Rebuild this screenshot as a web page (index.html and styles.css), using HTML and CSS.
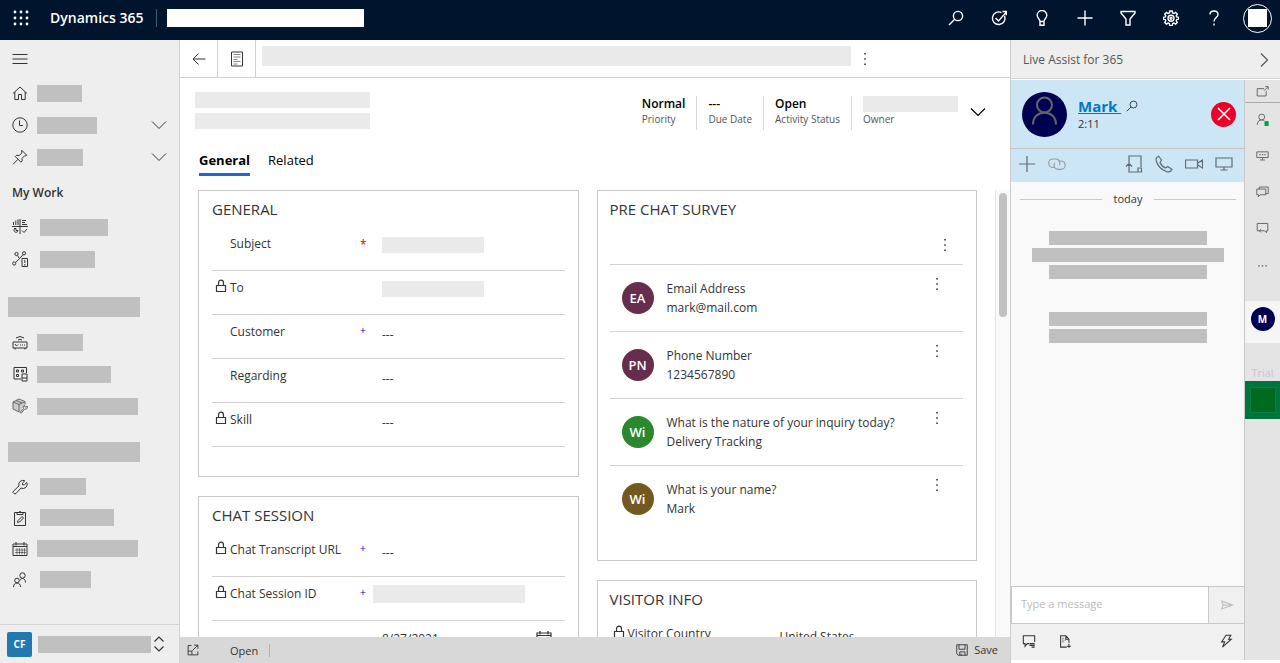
FILE: index.html
```html
<!DOCTYPE html>
<html lang="en">
<head>
    <meta charset="UTF-8">
    <meta name="viewport" content="width=device-width, initial-scale=1.0">
    <title>Dynamics 365</title>
    <link rel="stylesheet" href="styles.css">
</head>
<body>

    <!-- Shared icons -->
    <svg class="sprite" aria-hidden="true">
        <symbol id="lock" viewBox="0 0 12 14"><path d="M1.500 6.500h9v6h-9zM3.500 6.500V4a2.500 2.800 0 0 1 5 0v2.500"/></symbol>
        <symbol id="chevron" viewBox="0 0 16 16"><path d="M1 4.500l7 7 7-7"/></symbol>
        <symbol id="dots" viewBox="0 0 4 16"><path class="fill" d="M1.200 2h1.600v1.600H1.200zM1.200 7.200h1.600v1.600H1.200zM1.200 12.400h1.600v1.600H1.200z"/></symbol>
        <symbol id="search" viewBox="0 0 16 16"><circle cx="10" cy="6" r="4.600"/><path d="M6.700 9.300L1 15"/></symbol>
        <symbol id="calendar" viewBox="0 0 16 16"><path d="M1 3h14v11.500H1zM1 5.500h14M4 1v3.500M12 1v3.500"/><path class="thin" d="M5 7v6.500M7.500 7v6.500M10 7v6.500M12.500 7v6.500M3 9h11M3 11.500h11"/></symbol>
    </svg>

    <header class="topbar">
        <button class="icon-btn waffle" aria-label="App launcher">
            <svg viewBox="0 0 16 16"><g class="fill"><circle cx="2" cy="2" r="1.400"/><circle cx="8" cy="2" r="1.400"/><circle cx="14" cy="2" r="1.400"/><circle cx="2" cy="8" r="1.400"/><circle cx="8" cy="8" r="1.400"/><circle cx="14" cy="8" r="1.400"/><circle cx="2" cy="14" r="1.400"/><circle cx="8" cy="14" r="1.400"/><circle cx="14" cy="14" r="1.400"/></g></svg>
        </button>
        <a class="brand" href="#">Dynamics 365</a>
        <span class="app-name"></span>
        <div class="top-actions">
            <button class="icon-btn" aria-label="Search"><svg viewBox="0 0 16 16"><use href="#search"/></svg></button>
            <button class="icon-btn" aria-label="Assistant"><svg viewBox="0 0 16 16"><path d="M13.600 6A6.300 6.300 0 1 1 10.500 2.600M4.500 8l3 3L15 2.500M11.500 1.500H15.300V5.300"/></svg></button>
            <button class="icon-btn" aria-label="Insights"><svg viewBox="0 0 16 16"><path d="M6 11.500C6 9 3.200 8.300 3.200 5.300a4.800 4.800 0 0 1 9.600 0C12.800 8.300 10 9 10 11.500zM6 11.500v3.800h4v-3.800"/></svg></button>
            <button class="icon-btn" aria-label="New"><svg viewBox="0 0 16 16"><path d="M8 .5v15M.5 8h15"/></svg></button>
            <button class="icon-btn" aria-label="Filter"><svg viewBox="0 0 16 16"><path d="M1 1.500h14v1.500L10 9v6H6V9L1 3z"/></svg></button>
            <button class="icon-btn" aria-label="Settings"><svg viewBox="0 0 16 16"><path d="M6.800 1h2.400l.4 2 1.300.5 1.700-1.100 1.700 1.700-1.100 1.700.5 1.200 2 .4v1.700l-2 .4-.5 1.300 1.100 1.700-1.700 1.700-1.700-1.100-1.300.5-.4 2H6.800l-.4-2-1.300-.5-1.700 1.100-1.700-1.700 1.100-1.700-.5-1.300-2-.4V7.400l2-.4.5-1.200L1.700 4.100l1.700-1.700 1.700 1.100L6.400 3z"/><circle cx="8" cy="8.200" r="3"/><circle cx="8" cy="8.200" r="1"/></svg></button>
            <button class="icon-btn" aria-label="Help"><svg viewBox="0 0 16 16"><path d="M4 4.500C4 2.300 5.700 1 8 1s4 1.300 4 3.500C12 7.500 8 7.800 8 11.500M8 13.500v2"/></svg></button>
            <button class="account" aria-label="Account"><span></span></button>
        </div>
    </header>

    <div class="layout">

        <!-- Site map -->
        <nav class="sidebar">
            <div class="nav-scroll">
                <button class="nav-item menu" aria-label="Collapse menu"><svg viewBox="0 0 16 16"><path d="M.5 3.500h15M.5 8h15M.5 12.500h15"/></svg></button>
                <a class="nav-item" href="#"><svg viewBox="0 0 16 16"><path d="M1 8.500L8 2l7 6.500M2.800 7v7.500h3.700V9.500h3v5h3.700V7"/></svg><span class="bar w45"></span></a>
                <a class="nav-item" href="#"><svg viewBox="0 0 16 16"><circle cx="8" cy="8" r="7.200"/><path d="M7.500 3.500v5H11"/></svg><span class="bar w60"></span><svg class="expand" viewBox="0 0 16 16"><use href="#chevron"/></svg></a>
                <a class="nav-item" href="#"><svg viewBox="0 0 16 16"><path d="M9.800 1.300l5 5-1.300.6-.8-.2-2.700 2.700.2 2.500-1.300 1.300-5.600-5.600 1.300-1.300 2.600.2L10 3.800l-.4-1zM6 10.300L1 15.300"/></svg><span class="bar w46"></span><svg class="expand" viewBox="0 0 16 16"><use href="#chevron"/></svg></a>

                <h2 class="nav-heading">My Work</h2>
                <a class="nav-item wide" href="#"><svg viewBox="0 0 16 16"><path d="M0 7.500h16M8 0v15M1.500 6V3M3.800 6V1.500M6 6V.5M10 1.500h4M10 3.500h3M10 5.500h5M10 11.500l2 2 3-3.500M2 9.500h2v2h2a2 2 0 1 1-3.500-1.500"/></svg><span class="bar w68"></span></a>
                <a class="nav-item wide" href="#"><svg viewBox="0 0 16 16"><circle cx="4.500" cy="3" r="1.600"/><circle cx="12" cy="2.300" r="1.600"/><circle cx="2.200" cy="12.500" r="1.600"/><path d="M5.500 4.500l2 3.200L11 3.700M7.500 7.700L3.500 11.500M10 7.500h5.500v8H10zM12.800 9v3M12.800 13v1.500"/></svg><span class="bar w55"></span></a>

                <div class="group-bar w132"></div>
                <a class="nav-item" href="#"><svg viewBox="0 0 16 16"><path d="M1 8h14v6H1zM3 14v1.500M13 14v1.500M3 10l1.500 2L6 10.500M8 11h1M10 11h1M12 11h1M4 4q4-3 8 0M6 6q2-1.500 4 0"/></svg><span class="bar w46"></span></a>
                <a class="nav-item" href="#"><svg viewBox="0 0 16 16"><path d="M9 13H2V1.500h12.500V7M4.500 4h2v2h-2zM9.500 4h2v2h-2zM4.500 8.500h2v2h-2zM10 8h5v7h-5zM10 12h5"/></svg><span class="bar w74"></span></a>
                <a class="nav-item soft" href="#"><svg viewBox="0 0 16 16"><path class="shade" d="M1 4l6-3 6 2.500v3L8 13.500l-1 .5-6-3z"/><path d="M1 4l6 2.500L13 3.500 7 1zM1 4v7l6 3V6.500M13 3.500v3M4 2.500l6 2.500M8 14.500l3.500-4a2 2 0 0 1 1-3l.5 1.500h1.500l.5-1a2 2 0 0 1-2.500 3L9.500 15z"/></svg><span class="bar w101"></span></a>

                <div class="group-bar second w132"></div>
                <a class="nav-item wide" href="#"><svg viewBox="0 0 16 16"><path d="M2 14.500a1.600 1.600 0 0 1-.5-2.500L7 7a4.200 4.200 0 0 1 5.800-5.200L10.500 4v1.800h1.800l2.500-2.300A4.200 4.200 0 0 1 9 9l-5 5.500a1.600 1.600 0 0 1-2 0z"/></svg><span class="bar w46"></span></a>
                <a class="nav-item wide" href="#"><svg viewBox="0 0 16 16"><path d="M2.500 2.500h11v13h-11zM5 4.500v-2h2a1 1 0 0 1 2 0h2v2zM5.500 12.500l.5-2L10 6.500l1.500 1.500-4 4z"/></svg><span class="bar w74"></span></a>
                <a class="nav-item" href="#"><svg viewBox="0 0 16 16"><use href="#calendar"/></svg><span class="bar w101"></span></a>
                <a class="nav-item wide" href="#"><svg viewBox="0 0 16 16"><circle cx="10.500" cy="3.500" r="2.700"/><circle cx="5" cy="8.500" r="2.300"/><path d="M8 8.500c.5-1.500 1.300-2 2.500-2s3 1 3 4M1.500 15c0-2.500 1.500-4 3.500-4s3.500 1.500 3.500 4"/></svg><span class="bar w51"></span></a>
            </div>
            <button class="area-switch">
                <span class="area-badge">CF</span>
                <span class="bar w113"></span>
                <svg viewBox="0 0 12 16"><path d="M1.500 5.500L6 1l4.500 4.500M1.500 10.500L6 15l4.500-4.500"/></svg>
            </button>
        </nav>

        <!-- Record -->
        <main class="record">
            <div class="command-bar">
                <button class="cmd" aria-label="Back"><svg viewBox="0 0 16 16"><path d="M14.500 8H2M7.500 2.500L2 8l5.500 5.500"/></svg></button>
                <button class="cmd" aria-label="Form"><svg viewBox="0 0 16 16"><path d="M2.500 1h11v14h-11z"/><path class="thin" d="M4.500 3.500h7M4.500 6h7M4.500 8.500h4M4.500 10.500h7M4.500 13h4"/></svg></button>
                <span class="command-fill"></span>
                <button class="icon-btn more" aria-label="More commands"><svg viewBox="0 0 4 16"><use href="#dots"/></svg></button>
            </div>

            <div class="record-head">
                <div class="record-title"><span></span><span></span></div>
                <dl class="head-fields">
                    <div><dd>Normal</dd><dt>Priority</dt></div>
                    <div><dd>---</dd><dt>Due Date</dt></div>
                    <div><dd>Open</dd><dt>Activity Status</dt></div>
                    <div><dd class="owner"></dd><dt>Owner</dt></div>
                </dl>
                <button class="icon-btn head-expand" aria-label="More header fields"><svg viewBox="0 0 16 16"><use href="#chevron"/></svg></button>
            </div>

            <div class="tabs" role="tablist">
                <button class="tab active" role="tab" aria-selected="true">General</button>
                <button class="tab" role="tab" aria-selected="false">Related</button>
            </div>

            <div class="form-area">
                <div class="form-grid">
                    <div class="column">
                        <section class="card general">
                            <h2>GENERAL</h2>
                            <div class="field"><span class="lock"></span><span class="label">Subject</span><span class="mark required">*</span><span class="redacted"></span></div>
                            <div class="field"><svg class="lock"><use href="#lock"/></svg><span class="label">To</span><span class="mark"></span><span class="redacted"></span></div>
                            <div class="field"><span class="lock"></span><span class="label">Customer</span><span class="mark">+</span><span class="value">---</span></div>
                            <div class="field"><span class="lock"></span><span class="label">Regarding</span><span class="mark"></span><span class="value">---</span></div>
                            <div class="field"><svg class="lock"><use href="#lock"/></svg><span class="label">Skill</span><span class="mark"></span><span class="value">---</span></div>
                        </section>
                        <section class="card">
                            <h2>CHAT SESSION</h2>
                            <div class="field"><svg class="lock"><use href="#lock"/></svg><span class="label">Chat Transcript URL</span><span class="mark">+</span><span class="value">---</span></div>
                            <div class="field"><svg class="lock"><use href="#lock"/></svg><span class="label">Chat Session ID</span><span class="mark">+</span><span class="redacted long"></span></div>
                            <div class="field date"><span class="lock"></span><span class="label"></span><span class="mark"></span><span class="value">8/27/2021</span><svg class="date-icon" viewBox="0 0 16 16"><use href="#calendar"/></svg></div>
                        </section>
                    </div>
                    <div class="column">
                        <section class="card survey">
                            <h2>PRE CHAT SURVEY</h2>
                            <div class="survey-tools"><button class="icon-btn more" aria-label="More"><svg viewBox="0 0 4 16"><use href="#dots"/></svg></button></div>
                            <ul>
                                <li><span class="initials plum">EA</span><p>Email Address<br>mark@mail.com</p><button class="icon-btn more" aria-label="More"><svg viewBox="0 0 4 16"><use href="#dots"/></svg></button></li>
                                <li><span class="initials plum">PN</span><p>Phone Number<br>1234567890</p><button class="icon-btn more" aria-label="More"><svg viewBox="0 0 4 16"><use href="#dots"/></svg></button></li>
                                <li><span class="initials green">Wi</span><p>What is the nature of your inquiry today?<br>Delivery Tracking</p><button class="icon-btn more" aria-label="More"><svg viewBox="0 0 4 16"><use href="#dots"/></svg></button></li>
                                <li><span class="initials brown">Wi</span><p>What is your name?<br>Mark</p><button class="icon-btn more" aria-label="More"><svg viewBox="0 0 4 16"><use href="#dots"/></svg></button></li>
                            </ul>
                        </section>
                        <section class="card visitor-card">
                            <h2>VISITOR INFO</h2>
                            <div class="field"><svg class="lock"><use href="#lock"/></svg><span class="label">Visitor Country</span><span class="mark"></span><span class="value">United States</span></div>
                        </section>
                    </div>
                </div>
                <div class="scroll-track"><div class="scroll-thumb"></div></div>
            </div>

            <footer class="status-bar">
                <button class="icon-btn" aria-label="Pop out"><svg viewBox="0 0 16 16"><path d="M6 2H1.500v12.500h13V10M1.500 9.500h5v5M7 9l7.500-7.500M9.500 1.500h5v5"/></svg></button>
                <span class="state">Open</span>
                <button class="save"><svg viewBox="0 0 16 16"><path d="M1 1h14v14H3l-2-2zM4 1v6h8V1M5 15v-4.500h7V15M7 13v2"/></svg>Save</button>
            </footer>
        </main>

        <!-- Live Assist -->
        <aside class="assist">
            <header class="assist-head">
                <span>Live Assist for 365</span>
                <button class="icon-btn" aria-label="Collapse"><svg viewBox="0 0 16 16"><path d="M5 1.500L11.500 8 5 14.500"/></svg></button>
            </header>
            <div class="assist-body">
                <div class="chat">
                    <div class="visitor">
                        <svg class="visitor-photo" viewBox="0 0 45 45"><circle class="disc" cx="22.500" cy="22.500" r="22.500"/><circle cx="22.500" cy="13" r="7.500"/><path d="M11 32.500C11 25 16 20.800 22.500 20.800S34 25 34 32.500"/></svg>
                        <div class="visitor-info">
                            <div class="visitor-name"><a href="#">Mark&nbsp;</a><svg viewBox="0 0 16 16"><use href="#search"/></svg></div>
                            <div class="timer">2:11</div>
                        </div>
                        <button class="end-chat" aria-label="End chat"><svg viewBox="0 0 16 16"><path d="M2 2l12 12M14 2L2 14"/></svg></button>
                    </div>
                    <div class="chat-tools">
                        <button class="icon-btn" aria-label="Add"><svg viewBox="0 0 18 18"><path d="M9 1v16M1 9h16"/></svg></button>
                        <button class="icon-btn link" aria-label="Link"><svg viewBox="0 0 18 18"><path d="M7 12.500H5A4 4 0 0 1 5 4h3a4 4 0 0 1 3.300 6.200M10.500 6H13a4 4 0 0 1 0 8.300h-3A4 4 0 0 1 6.700 8"/></svg></button>
                        <span class="spacer"></span>
                        <button class="icon-btn" aria-label="Transfer"><svg viewBox="0 0 18 18"><path d="M4 8V1h12v11M1 11.500l3-3 3 3M4 9v8h9M13 13v4h3.500v-4z"/></svg></button>
                        <button class="icon-btn" aria-label="Call"><svg viewBox="0 0 18 18"><path d="M3.500 1.200L6.500 5 5 7.500c.8 2.200 3 4.400 5.500 5.500l2.300-1.500 4.200 3c-1.200 2.300-3.300 3-5.700 2C6.300 14.500 2.500 10.500 1.300 6 .7 4 1.500 2 3.500 1.200z"/></svg></button>
                        <button class="icon-btn" aria-label="Video"><svg viewBox="0 0 18 18"><path d="M.5 5h12v8H.5zM12.500 8.200L17.500 5v8l-5-3.200"/></svg></button>
                        <button class="icon-btn" aria-label="Share screen"><svg viewBox="0 0 18 18"><path d="M1 3h16v9H1zM9 12v2.500M5.500 15h7"/></svg></button>
                    </div>
                    <div class="messages">
                        <div class="day">today</div>
                        <div class="message"><span></span><span class="full"></span><span></span></div>
                        <div class="message"><span></span><span></span></div>
                    </div>
                    <form class="composer">
                        <input type="text" aria-label="Type a message" placeholder="Type a message">
                        <button type="button" aria-label="Send"><svg viewBox="0 0 16 16"><path d="M2 3.500L14.500 8 2 12.500 3.500 8zM3.500 8h11"/></svg></button>
                    </form>
                    <div class="chat-footer">
                        <button class="icon-btn" aria-label="Canned replies"><svg viewBox="0 0 16 16"><path d="M8 11H6l-2.500 3v-3H1.500V2h13v7M8.500 11h6M8.500 13h6M11 15h3.500"/></svg></button>
                        <button class="icon-btn" aria-label="Send file"><svg viewBox="0 0 16 16"><path d="M12.500 10V6L9 2H3v13h7M9 2v4h3.500M10.500 13.500l2 1.500 2-1.500M12.500 11v4"/><path class="thin" d="M4.500 5H7M4.500 7H9M4.500 9H7"/></svg></button>
                        <span class="spacer"></span>
                        <button class="icon-btn" aria-label="Quick actions"><svg viewBox="0 0 16 16"><path d="M8 1.500h5.500L11 6h3L4 15l2.500-6H3z"/></svg></button>
                    </div>
                </div>

                <div class="rail">
                    <button class="rail-pop" aria-label="Open in window"><svg viewBox="0 0 16 16"><path d="M10 4.500H1.500v9h11V7.500M10 7l4.500-4.500M11.500 2h3.500v3.500"/></svg></button>
                    <button aria-label="Agent status"><svg viewBox="0 0 16 16"><circle cx="7" cy="5" r="3.600"/><path d="M1.500 14.500c0-4 2.500-6 5.500-6 1.800 0 3 .8 3.500 1.500"/><path class="online" d="M10.500 10h5v6h-5z"/></svg></button>
                    <button aria-label="Chats"><svg viewBox="0 0 16 16"><path d="M1 3.500h14v7H1zM8 10.500v2.500M5 13.500h6M4 7h2M7 7h2M10 7h2"/></svg></button>
                    <button aria-label="Conversations"><svg viewBox="0 0 16 16"><path d="M1 5h11v7H5l-2 2.500V12H1zM4 5V2.500h11v8h-3"/></svg></button>
                    <button aria-label="Messages"><svg viewBox="0 0 16 16"><path d="M4 12H1.500V3h13v9H13v2.500L10.500 12H4M6 10L4 12l2 2"/></svg></button>
                    <button aria-label="More"><svg viewBox="0 0 16 16"><path class="dash" d="M2.500 11h11"/></svg></button>
                    <button class="rail-chat"><span>M</span></button>
                    <div class="trial">Trial</div>
                    <div class="trial-tile"><span></span></div>
                </div>
            </div>
        </aside>

    </div>

</body>
</html>
```

FILE: styles.css
```css
* {
    box-sizing: border-box;
}
body {
    margin: 0;
    height: 100vh;
    display: flex;
    flex-direction: column;
    overflow: hidden;
    font-family: "Open Sans", "Noto Sans", sans-serif;
    font-size: 12px;
    line-height: 18px;
    color: #333;
    background: #fff;
}
button {
    font: inherit;
    color: inherit;
    background: none;
    border: 0;
    padding: 0;
    display: flex;
    align-items: center;
    justify-content: center;
}
a {
    color: inherit;
    text-decoration: none;
}
h2, p, ul, dl, dd {
    margin: 0;
    padding: 0;
}
svg {
    width: 16px;
    height: 16px;
    flex: none;
    fill: none;
    stroke: currentColor;
    stroke-width: 1.2;
}
.sprite {
    position: absolute;
    width: 0;
    height: 0;
}
.fill {
    fill: currentColor;
    stroke: none;
}
.thin {
    stroke-width: 0.6;
}
.shade {
    fill: #ccc;
    stroke: none;
}
.spacer {
    flex: 1;
}

/* Top bar */
.topbar {
    height: 40px;
    flex: none;
    display: flex;
    align-items: center;
    padding: 0 8px 4px 13px;
    background: #00142e;
    color: #fff;
}
.topbar svg {
    stroke-width: 1.4;
}
.brand {
    margin-left: 21px;
    padding-right: 13px;
    border-right: 1px solid #4a586b;
    font-size: 14px;
    font-weight: 600;
}
.app-name {
    width: 197px;
    height: 18px;
    margin-left: 10px;
    background: #fff;
}
.top-actions {
    margin-left: auto;
    display: flex;
    align-items: center;
    gap: 27px;
}
.account {
    width: 29px;
    height: 29px;
    margin-left: -6px;
    border: 1px solid #fff;
    border-radius: 50%;
}
.account span {
    width: 19px;
    height: 18px;
    background: #fff;
}

.layout {
    flex: 1;
    min-height: 0;
    display: grid;
    grid-template-columns: 180px minmax(0, 1fr) 270px;
}

/* Sidebar */
.sidebar {
    display: flex;
    flex-direction: column;
    min-height: 0;
    background: #eee;
    border-right: 1px solid #d2d2d2;
}
.nav-scroll {
    flex: 1;
    min-height: 0;
    overflow: hidden;
    padding-top: 3px;
}
.nav-item {
    display: flex;
    align-items: center;
    height: 32px;
    padding: 0 12px;
    gap: 9px;
}
.nav-item.wide {
    gap: 12px;
}
.nav-item.menu {
    margin-bottom: 2px;
}
.nav-item svg {
    stroke-width: 1;
}
.nav-item.soft svg {
    color: #666;
}
.nav-item .thin {
    stroke-width: 0.6;
}
.nav-item .expand {
    margin-left: auto;
}
.nav-heading {
    padding: 11px 12px 9px;
    font-size: 12px;
    line-height: 18px;
    font-weight: 600;
}
.bar {
    height: 17px;
    background: #c0c0c0;
}
.group-bar {
    height: 20px;
    margin: 22px 8px 9px;
    background: #c0c0c0;
}
.group-bar.second {
    margin-top: 20px;
}
.group-bar.second ~ .nav-item {
    height: 31px;
}
.w45 { width: 45px; }
.w46 { width: 46px; }
.w51 { width: 51px; }
.w55 { width: 55px; }
.w60 { width: 60px; }
.w68 { width: 68px; }
.w74 { width: 74px; }
.w101 { width: 101px; }
.w113 { width: 113px; }
.w132 { width: 132px; }
.area-switch {
    height: 39px;
    justify-content: flex-start;
    padding-left: 7px;
    border-top: 1px solid #d2d2d2;
}
.area-badge {
    width: 25px;
    line-height: 25px;
    margin-right: 6px;
    border-radius: 2px;
    background: #2278b0;
    color: #fff;
    font-size: 10px;
    font-weight: 700;
}
.area-switch svg {
    width: 12px;
    margin-left: 2px;
}

/* Record */
.record {
    display: flex;
    flex-direction: column;
    min-width: 0;
    min-height: 0;
}
.command-bar {
    display: flex;
    height: 38px;
    flex: none;
    border-bottom: 1px solid #d2d2d2;
}
.cmd {
    width: 38px;
    border-right: 1px solid #d2d2d2;
}
.cmd svg {
    stroke-width: 1;
}
.command-fill {
    flex: 1;
    height: 20px;
    margin: 6px 12px 0 6px;
    background: #eaeaea;
}
.more svg {
    width: 4px;
}
.command-bar .more {
    margin-right: 143px;
}
.record-head {
    display: flex;
    padding: 14px 24px 0 15px;
    height: 66px;
}
.record-title {
    display: flex;
    flex-direction: column;
    gap: 5px;
}
.record-title span {
    width: 175px;
    height: 16px;
    background: #eaeaea;
}
.head-fields {
    display: flex;
    margin-left: auto;
    margin-top: 4px;
    height: 34px;
}
.head-fields div {
    padding: 0 11px;
    border-left: 1px solid #d8d8d8;
}
.head-fields div:first-child {
    border: 0;
}
.head-fields dd {
    height: 16px;
    line-height: 16px;
    font-weight: 600;
    color: #000;
}
.head-fields dt {
    line-height: 14px;
    font-size: 10px;
    color: #555;
}
.head-fields .owner {
    width: 95px;
    background: #eaeaea;
}
.head-expand {
    height: 40px;
    margin-left: 1px;
    color: #000;
}
.tabs {
    display: flex;
    gap: 18px;
    padding: 6px 19px 0;
    height: 46px;
}
.tab {
    height: 26px;
    padding-bottom: 3px;
    font-size: 13px;
    color: #000;
    border-bottom: 3px solid transparent;
}
.tab.active {
    font-weight: 700;
    border-color: #1f66d8;
}
.form-area {
    flex: 1;
    min-height: 0;
    overflow: hidden;
    display: flex;
}
.form-grid {
    flex: 1;
    display: grid;
    grid-template-columns: 1fr 1fr;
    gap: 18px;
    padding: 0 18px;
}
.column {
    display: flex;
    flex-direction: column;
    gap: 19px;
}
.card {
    flex: none;
    padding: 8px 13px 29px;
    border: 1px solid #c8c8c8;
}
.survey, .visitor-card {
    padding-left: 12px;
}
.survey {
    padding-bottom: 27px;
}
.card h2 {
    font-size: 15px;
    line-height: 20px;
    font-weight: 400;
    margin-bottom: 8px;
}
.field {
    display: grid;
    grid-template-columns: 18px 127px 25px 1fr auto;
    height: 44px;
    padding-top: 8px;
    border-bottom: 1px solid #d2d2d2;
}
.field.date {
    padding-top: 6px;
}
svg.lock {
    width: 12px;
    height: 14px;
    margin-left: 3px;
}
.mark {
    font-size: 10px;
    line-height: 14px;
    padding-left: 3px;
    color: #00c;
}
.required {
    font-size: 12px;
    line-height: 20px;
    color: #e00;
}
.value {
    margin-top: 3px;
}
.redacted {
    width: 102px;
    height: 16px;
    margin-top: 2px;
    background: #eaeaea;
}
.redacted.long {
    width: 152px;
    height: 18px;
    margin-top: 0;
    margin-left: -9px;
}
.date-icon {
    margin-top: 3px;
    margin-right: 13px;
}
.survey-tools {
    display: flex;
    justify-content: flex-end;
    height: 38px;
    padding: 0 16px 2px 0;
    border-bottom: 1px solid #d2d2d2;
}
.survey li {
    display: flex;
    height: 67px;
    padding: 14px 24px 0 12px;
    border-bottom: 1px solid #d2d2d2;
}
.survey li:last-child {
    border: 0;
}
.survey li p {
    flex: 1;
    margin-left: 13px;
    line-height: 19px;
}
.survey li .more {
    height: 16px;
    margin-top: -3px;
}
.initials {
    width: 32px;
    height: 32px;
    margin-top: 3px;
    border-radius: 50%;
    line-height: 32px;
    text-align: center;
    font-size: 13px;
    font-weight: 600;
    color: #fff;
}
.plum { background: #672d4c; }
.green { background: #2b882d; }
.brown { background: #73591f; }
.scroll-track {
    width: 15px;
    padding: 3px;
    background: #fafafa;
    border-left: 1px solid #e4e4e4;
}
.scroll-thumb {
    width: 8px;
    height: 124px;
    border-radius: 4px;
    background: #c1c1c1;
}
.status-bar {
    display: flex;
    align-items: center;
    height: 26px;
    flex: none;
    padding: 0 12px 0 7px;
    background: #d8d8d8;
    font-size: 11px;
}
.status-bar svg {
    width: 12px;
    height: 12px;
}
.state {
    margin-left: 31px;
    padding-right: 11px;
    line-height: 13px;
    border-right: 1px solid #b0b0b0;
}
.save {
    margin-left: auto;
    gap: 6px;
}

/* Live Assist panel */
.assist {
    display: flex;
    flex-direction: column;
    min-height: 0;
    padding-bottom: 3px;
    border-left: 1px solid #ccc;
}
.assist-head {
    display: flex;
    align-items: center;
    justify-content: space-between;
    height: 39px;
    flex: none;
    margin-bottom: 1px;
    padding: 1px 8px 0 12px;
    background: #eee;
    border-bottom: 1px solid #d2d2d2;
    color: #555;
}
.assist-body {
    flex: 1;
    min-height: 0;
    display: flex;
}
.chat {
    flex: 1;
    min-width: 0;
    display: flex;
    flex-direction: column;
}
.visitor {
    display: flex;
    align-items: center;
    height: 69px;
    padding: 0 8px 0 11px;
    background: #cde6f5;
    border-bottom: 1px solid #c4c4c4;
}
.visitor-photo {
    width: 45px;
    height: 45px;
    color: #666;
    stroke-width: 2;
}
.disc {
    fill: #000051;
    stroke: none;
}
.visitor-info {
    flex: 1;
    margin-left: 11px;
}
.visitor-name {
    display: flex;
    align-items: center;
    gap: 5px;
    line-height: 20px;
}
.visitor-name a {
    font-size: 15px;
    font-weight: 700;
    color: #0078c8;
    text-decoration: underline;
}
.visitor-name svg {
    width: 12px;
    height: 12px;
}
.timer {
    font-size: 11px;
    line-height: 16px;
}
.end-chat {
    width: 25px;
    height: 25px;
    border-radius: 50%;
    background: #ea0029;
    color: #fff;
}
.end-chat svg {
    stroke-width: 1.6;
}
.chat-tools {
    display: flex;
    align-items: center;
    height: 33px;
    gap: 12px;
    padding: 0 11px 3px 7px;
    background: #cde6f5;
    color: #5f6b73;
}
.chat-tools svg {
    width: 18px;
    height: 18px;
}
.chat-tools .link {
    color: #9a9a9a;
}
.messages {
    flex: 1;
    min-height: 0;
    padding: 8px 8px 8px 9px;
    background: #f9f9f9;
}
.day {
    display: flex;
    align-items: center;
    gap: 12px;
    font-size: 11px;
}
.day::before, .day::after {
    content: "";
    flex: 1;
    height: 1px;
    background: #c8c8c8;
}
.message {
    display: flex;
    flex-direction: column;
    align-items: center;
    gap: 3px;
    margin: 23px 0 33px;
}
.message span {
    width: 158px;
    height: 14px;
    background: #c0c0c0;
}
.message .full {
    width: 192px;
}
.composer {
    display: flex;
    height: 38px;
    border: 1px solid #c8c8c8;
    border-right: 0;
}
.composer input {
    flex: 1;
    min-width: 0;
    padding: 0 9px 2px;
    border: 0;
    font: inherit;
    font-size: 11px;
    background: #fff;
}
.composer input::placeholder {
    color: #bbb;
}
.composer button {
    width: 36px;
    background: #f0f0f0;
    border-left: 1px solid #c8c8c8;
    color: #bbb;
}
.composer svg {
    width: 14px;
    height: 14px;
}
.chat-footer {
    display: flex;
    align-items: center;
    gap: 22px;
    height: 36px;
    padding: 0 11px 3px;
    background: #f0f0f0;
}
.chat-footer svg {
    width: 14px;
    height: 14px;
}
.rail {
    width: 36px;
    background: #e4e4e4;
    border-left: 1px solid #c8c8c8;
    color: #666;
}
.rail button {
    width: 100%;
    height: 36px;
    padding-bottom: 3px;
}
.rail svg {
    width: 13px;
    height: 13px;
}
.rail .rail-pop {
    height: 23px;
    padding: 0;
    border-bottom: 1px solid #aaa;
}
.online {
    fill: #00a050;
    stroke: none;
}
.dash {
    stroke-width: 1.6;
    stroke-dasharray: 2 2.5;
}
.rail .rail-chat {
    height: 42px;
    margin-top: 18px;
    padding-bottom: 7px;
    background: #f5f5f5;
}
.rail-chat span {
    width: 24px;
    line-height: 24px;
    border-radius: 50%;
    background: #000051;
    color: #fff;
    font-size: 10px;
    font-weight: 700;
}
.trial {
    padding-top: 22px;
    line-height: 16px;
    text-align: center;
    font-size: 11px;
    color: #c8c8c8;
}
.trial-tile {
    display: flex;
    align-items: center;
    justify-content: center;
    height: 38px;
    background: #00743f;
}
.trial-tile span {
    width: 26px;
    height: 26px;
    background: #006b1f;
    border: 1px solid #107c3c;
}
```
